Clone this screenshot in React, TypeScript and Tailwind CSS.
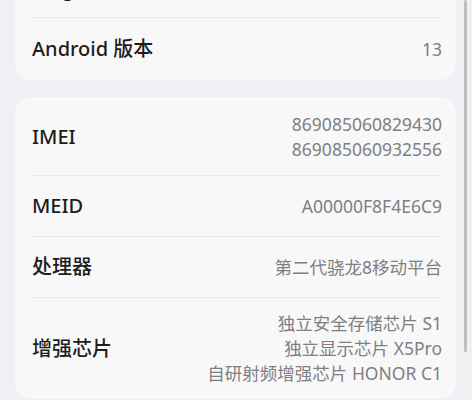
import React from "react";

type Row = {
  label: string;
  values: string[];
};

const topRows: Row[] = [
  { label: "MagicOS 版本", values: ["7.1.0.128"] },
  { label: "Android 版本", values: ["13"] },
];

const hardwareRows: Row[] = [
  { label: "IMEI", values: ["869085060829430", "869085060932556"] },
  { label: "MEID", values: ["A00000F8F4E6C9"] },
  { label: "处理器", values: ["第二代骁龙8移动平台"] },
  {
    label: "增强芯片",
    values: ["独立安全存储芯片 S1", "独立显示芯片 X5Pro", "自研射频增强芯片 HONOR C1"],
  },
];

const InfoRow = ({ row, first, className }: { row: Row; first?: boolean; className?: string }) => (
  <div
    className={`flex items-center justify-between gap-4 py-[13px] ${
      first ? "" : "border-t border-[#e9e9ec]"
    } ${className ?? "min-h-[61px]"}`}
  >
    <span className="text-[20px] font-medium text-[#1d1d1f] whitespace-nowrap">{row.label}</span>
    <div className="flex flex-col items-end text-right">
      {row.values.map((v) => (
        <span key={v} className="text-[17.5px] leading-[25px] text-[#7f7f82] whitespace-nowrap">
          {v}
        </span>
      ))}
    </div>
  </div>
);

export default function App() {
  return (
    <div
      className="relative h-[400px] w-[472px] overflow-hidden bg-[#f0eff4]"
      style={{ fontFamily: '"Noto Sans", "Noto Sans CJK SC", sans-serif' }}
    >
      <div className="flex flex-col gap-[17px] pl-[15px] pr-[16px]">
        {/* card cut off at the top of the screen */}
        <div className="-mt-[39px] rounded-b-[16px] bg-[#f8f8f8] pl-[17px] pr-[14px]">
          <InfoRow row={topRows[0]} first className="min-h-[56px]" />
          <InfoRow row={topRows[1]} className="min-h-[63px]" />
        </div>

        <div className="rounded-[16px] bg-[#f8f8f8] pl-[17px] pr-[14px] pt-[2px]">
          {hardwareRows.map((row, i) => (
            <InfoRow key={row.label} row={row} first={i === 0} />
          ))}
        </div>
      </div>

      {/* scrollbar */}
      <div className="absolute right-[5px] top-0 h-[352px] w-[3px] rounded-full bg-[#bfbfc2]" />
    </div>
  );
}
